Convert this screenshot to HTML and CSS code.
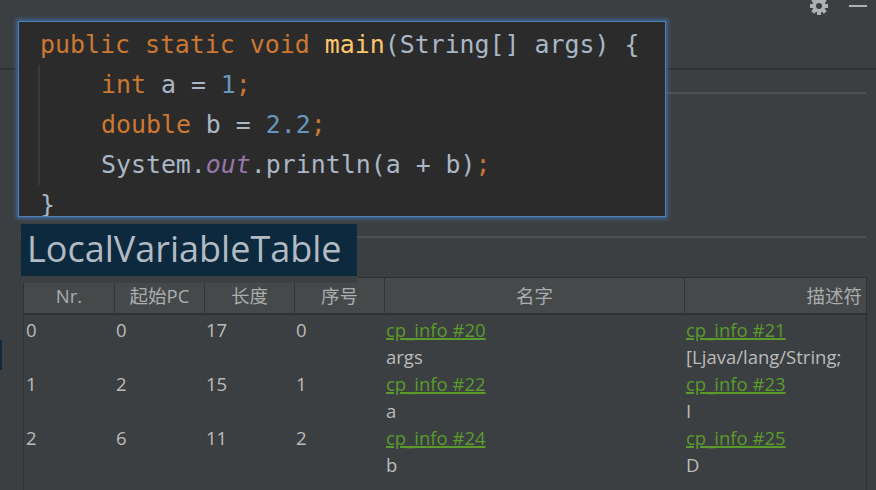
FILE: index.html
```html
<!DOCTYPE html>
<html>
<head>
<meta charset="utf-8">
<title>LocalVariableTable</title>
<link rel="stylesheet" href="styles.css">
</head>
<body>
<div class="page">
  <div class="toolbar">
    <svg class="gear" viewBox="0 0 20 16" aria-hidden="true">
      <g transform="translate(10 6)" fill="#afb1b3">
        <rect x="-2" y="-9" width="4" height="18"/>
        <rect x="-2" y="-9" width="4" height="18" transform="rotate(45)"/>
        <rect x="-2" y="-9" width="4" height="18" transform="rotate(90)"/>
        <rect x="-2" y="-9" width="4" height="18" transform="rotate(135)"/>
        <circle r="6.5"/>
        <circle r="3" fill="#3c3f41"/>
      </g>
    </svg>
    <span class="minus"></span>
  </div>
  <div class="tabs"></div>
  <div class="panel"></div>
  <div class="main">
    <div class="gutter"><span class="marker"></span></div>
    <div class="table">
      <div class="thead">
        <div class="th">Nr.</div>
        <div class="th">起始PC</div>
        <div class="th">长度</div>
        <div class="th">序号</div>
        <div class="th">名字</div>
        <div class="th right">描述符</div>
      </div>
      <div class="tbody">
        <div class="row">
          <div class="td">0</div>
          <div class="td">0</div>
          <div class="td">17</div>
          <div class="td">0</div>
          <div class="td"><span class="link">cp_info #20</span><br>args</div>
          <div class="td"><span class="link">cp_info #21</span><br>[Ljava/lang/String;</div>
        </div>
        <div class="row">
          <div class="td">1</div>
          <div class="td">2</div>
          <div class="td">15</div>
          <div class="td">1</div>
          <div class="td"><span class="link">cp_info #22</span><br>a</div>
          <div class="td"><span class="link">cp_info #23</span><br>I</div>
        </div>
        <div class="row">
          <div class="td">2</div>
          <div class="td">6</div>
          <div class="td">11</div>
          <div class="td">2</div>
          <div class="td"><span class="link">cp_info #24</span><br>b</div>
          <div class="td"><span class="link">cp_info #25</span><br>D</div>
        </div>
      </div>
    </div>
  </div>

  <div class="popup">
    <div class="code">
      <div class="ln"><span class="kw">public static void </span><span class="fn">main</span>(String[] args) {</div>
      <div class="blk">
        <div class="ln">    <span class="kw">int</span> a = <span class="num">1</span><span class="kw">;</span></div>
        <div class="ln">    <span class="kw">double</span> b = <span class="num">2.2</span><span class="kw">;</span></div>
        <div class="ln">    System.<span class="fld">out</span>.println(a + b)<span class="kw">;</span></div>
      </div>
      <div class="ln">}</div>
    </div>
  </div>

  <div class="label">LocalVariableTable</div>
</div>
</body>
</html>
```

FILE: styles.css
```css
* {
  box-sizing: border-box;
}

html,
body {
  margin: 0;
  padding: 0;
}

body {
  width: 876px;
  height: 490px;
  overflow: hidden;
  background: #3c3f41;
  color: #bbbbbb;
  font-family: "Open Sans", "Noto Sans CJK SC", sans-serif;
}

.page {
  position: relative;
  display: flex;
  flex-direction: column;
  height: 490px;
}

/* top toolbar */
.toolbar {
  height: 70px;
  flex: none;
  border-bottom: 2px solid #313335;
  display: flex;
  justify-content: flex-end;
  align-items: flex-start;
  gap: 20px;
  padding-right: 9px;
}

.gear {
  display: block;
  width: 20px;
  height: 16px;
}

.minus {
  display: block;
  width: 18px;
  height: 2px;
  margin-top: 5px;
  background: #afb1b3;
}

.tabs {
  height: 24px;
  flex: none;
  margin: 0 10px 0 20px;
  border-bottom: 2px solid #4f5254;
}

.panel {
  height: 144px;
  flex: none;
  margin: 0 10px 0 20px;
  border-bottom: 2px solid #4f5254;
}

/* table area */
.main {
  flex: 1;
  min-height: 0;
  display: flex;
  margin-top: 39px;
}

.gutter {
  width: 23px;
  flex: none;
}

.marker {
  display: block;
  width: 2px;
  height: 30px;
  margin-top: 63px;
  background: #0d2a40;
}

.table {
  width: 844px;
  flex: none;
  border: 1px solid #2d2f31;
  border-bottom: none;
}

.thead,
.row {
  display: grid;
  grid-template-columns: 90px 90px 90px 90px 300px 182px;
}

.thead {
  height: 37px;
  background: #45494a;
  border-bottom: 2px solid #2f3133;
}

.th {
  font-size: 18.5px;
  line-height: 36px;
  text-align: center;
  color: #abadaf;
  white-space: nowrap;
}

.th + .th {
  border-left: 1px solid #323436;
}

.th.right {
  text-align: right;
  padding-right: 4px;
}

.tbody {
  padding-top: 1px;
}

.td {
  height: 54px;
  font-size: 18.5px;
  line-height: 27px;
  padding-left: 2px;
  color: #bbbbbb;
  white-space: nowrap;
}

.link {
  color: #5a9b2c;
  text-decoration: underline;
  text-decoration-thickness: 2px;
  text-underline-offset: 1px;
}

/* code popup overlay */
.popup {
  position: absolute;
  left: 19px;
  top: 22px;
  width: 646px;
  height: 194px;
  overflow: hidden;
  background: #2b2b2b;
  box-shadow: 0 0 0 1px #4a80bb, 0 0 4px 3px rgba(70, 130, 200, 0.6);
}

.code {
  padding: 3px 0 0 19px;
  font-family: "DejaVu Sans Mono", monospace;
  font-size: 24.9px;
  line-height: 40px;
  color: #a9b7c6;
}

.ln {
  white-space: pre;
  padding-left: 2px;
}

.blk {
  border-left: 2px solid #3a3a3a;
}

.blk .ln {
  padding-left: 1px;
}

.kw {
  color: #cc7832;
}

.fn {
  color: #ffc66d;
}

.num {
  color: #6897bb;
}

.fld {
  color: #9876aa;
  font-style: italic;
}

/* caption overlay */
.label {
  position: absolute;
  left: 21px;
  top: 224px;
  width: 336px;
  height: 59px;
  background: #0d293e;
  border-bottom: 7px solid #3d4042;
  padding-left: 6px;
  font-family: "Open Sans", sans-serif;
  font-size: 36px;
  line-height: 50px;
  color: #b2bbc4;
  white-space: nowrap;
}
```
